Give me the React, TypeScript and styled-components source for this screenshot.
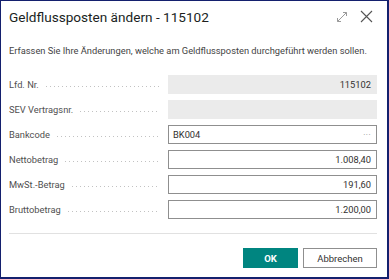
import { FC } from "react";
import styled, { createGlobalStyle } from "styled-components";

const GlobalStyle = createGlobalStyle`
	html, body {
		margin: 0;
		padding: 0;
		background: #ffffff;
	}
	* {
		box-sizing: border-box;
	}
`;

type Row = { label: string; value: string; editable?: boolean; lookup?: boolean; align?: "left" | "right" };

const rows: Row[] = [
	{ label: "Lfd. Nr.", value: "115102" },
	{ label: "SEV Vertragsnr.", value: "" },
	{ label: "Bankcode", value: "BK004", editable: true, lookup: true, align: "left" },
	{ label: "Nettobetrag", value: "1.008,40", editable: true },
	{ label: "MwSt.-Betrag", value: "191,60", editable: true },
	{ label: "Bruttobetrag", value: "1.200,00", editable: true },
];

const App: FC = () => {
	return (
		<>
			<GlobalStyle />
			<Dialog>
				<Header>
					<Title>Geldflussposten ändern - 115102</Title>
					<HeaderIcons>
						<IconButton aria-label='Maximieren'>
							<svg width='12' height='12' viewBox='0 0 12 12' fill='none' stroke='#9a9a9a' strokeWidth='1'>
								<path d='M1.5 10.5 L10.5 1.5' />
								<path d='M7 1.5 H10.5 V5' />
								<path d='M1.5 7 V10.5 H5' />
							</svg>
						</IconButton>
						<IconButton aria-label='Schließen'>
							<svg width='13' height='13' viewBox='0 0 13 13' fill='none' stroke='#555' strokeWidth='1.1'>
								<path d='M1 1 L12 12 M12 1 L1 12' />
							</svg>
						</IconButton>
					</HeaderIcons>
				</Header>

				<Description>Erfassen Sie Ihre Änderungen, welche am Geldflussposten durchgeführt werden sollen.</Description>

				<Fields>
					{rows.map((row) => (
						<FieldRow key={row.label}>
							<LabelCell>
								<Label>{row.label}</Label>
								<Leader />
							</LabelCell>
							<Field $editable={!!row.editable} $align={row.align || "right"}>
								<span>{row.value}</span>
								{row.lookup && <Lookup>···</Lookup>}
							</Field>
						</FieldRow>
					))}
				</Fields>

				<Footer>
					<PrimaryButton>OK</PrimaryButton>
					<SecondaryButton>Abbrechen</SecondaryButton>
				</Footer>
			</Dialog>
		</>
	);
};

export default App;

const Dialog = styled.div`
	width: 389px;
	height: 279px;
	border-style: solid;
	border-color: #14206e;
	border-width: 1px 2px 2px 1px;
	background: #fff;
	font-family: Roboto, "Open Sans", sans-serif;
	color: #323130;
	padding: 0 10px 0 8px;
	display: flex;
	flex-direction: column;
`;

const Header = styled.div`
	display: flex;
	align-items: center;
	justify-content: space-between;
	height: 30px;
	padding-top: 1px;
`;

const Title = styled.h1`
	margin: 0;
	font-size: 13.6px;
	font-weight: 400;
	color: #201f1e;
	white-space: nowrap;
`;

const HeaderIcons = styled.div`
	display: flex;
	align-items: center;
	gap: 12px;
	padding-right: 4px;
`;

const IconButton = styled.span`
	display: flex;
	align-items: center;
	justify-content: center;
`;

const Description = styled.p`
	margin: 13px 0 0;
	font-size: 9.3px;
	color: #444;
	line-height: 14px;
	white-space: nowrap;
`;

const Fields = styled.div`
	display: flex;
	flex-direction: column;
	gap: 6px;
	margin-top: 17px;
`;

const FieldRow = styled.div`
	display: grid;
	grid-template-columns: 159px 1fr;
	height: 19px;
	align-items: center;
`;

const LabelCell = styled.div`
	display: flex;
	align-items: center;
	gap: 7px;
	padding-right: 8px;
	height: 100%;
`;

const Label = styled.span`
	font-size: 9.3px;
	color: #505050;
	white-space: nowrap;
`;

const Leader = styled.span`
	flex: 1;
	height: 1px;
	margin-top: 3px;
	background-image: linear-gradient(to right, #c2c2c2 1px, transparent 1px);
	background-size: 4px 1px;
	background-repeat: repeat-x;
`;

const Field = styled.div<{ $editable: boolean; $align: "left" | "right" }>`
	height: 19px;
	display: flex;
	align-items: center;
	justify-content: ${(p) => (p.$align === "left" ? "space-between" : "flex-end")};
	padding: 0 5px 0 4px;
	font-size: 9.3px;
	color: #323130;
	background: ${(p) => (p.$editable ? "#fff" : "#ebebeb")};
	border: 1px solid ${(p) => (p.$editable ? "#8f8f8f" : "#ebebeb")};
`;

const Lookup = styled.span`
	color: #8a8a8a;
	font-size: 8px;
	letter-spacing: 0.5px;
`;

const Footer = styled.div`
	display: flex;
	justify-content: flex-end;
	gap: 5px;
	margin-top: 14px;
	padding-top: 14px;
	border-top: 1px solid #e1e1e1;
`;

const BaseButton = styled.button`
	height: 20px;
	font-family: inherit;
	font-size: 9.5px;
	padding: 0;
	cursor: pointer;
`;

const PrimaryButton = styled(BaseButton)`
	width: 55px;
	background: #008580;
	border: 1px solid #008580;
	color: #fff;
	font-weight: 700;
`;

const SecondaryButton = styled(BaseButton)`
	width: 74px;
	background: #fff;
	border: 1px solid #8f8f8f;
	color: #323130;
`;
